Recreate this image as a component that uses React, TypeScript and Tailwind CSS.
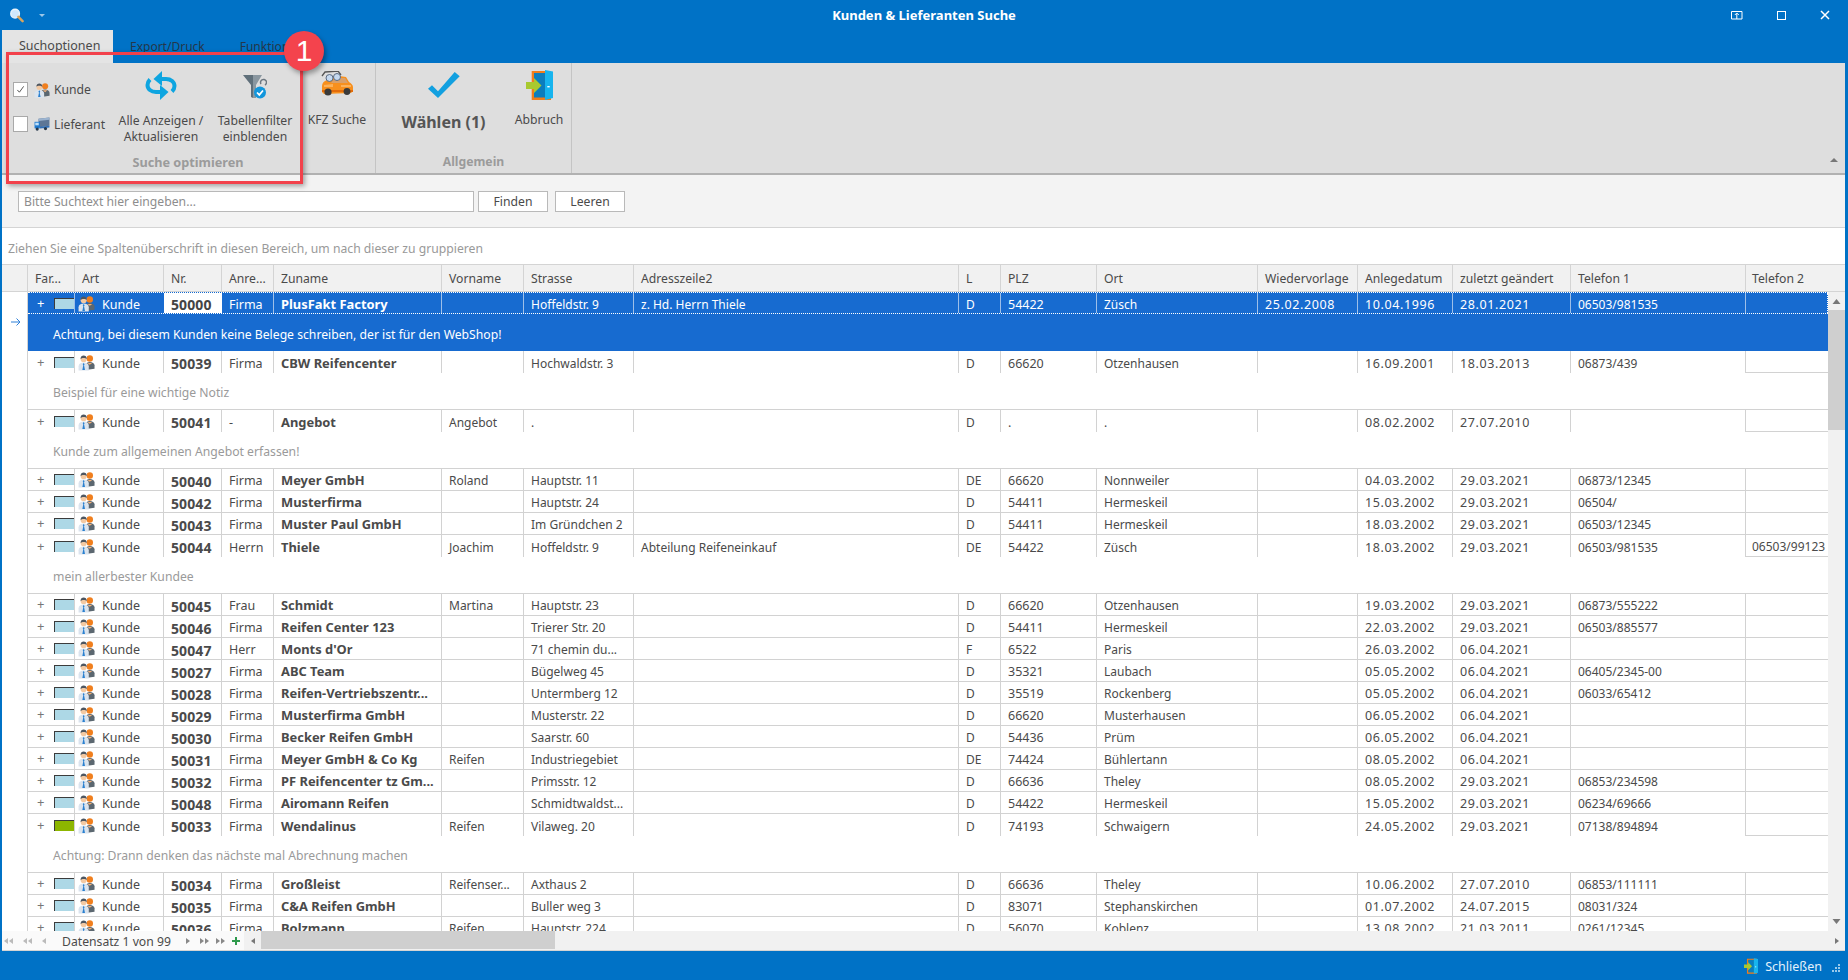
import React from "react";

type Row = {
  n: string; a: string; z: string; v?: string; s?: string; ad?: string; l: string; p: string; o: string;
  w?: string; an: string; zu: string; t1?: string; t2?: string; note?: string; green?: boolean;
};

const rows: Row[] = [
  { n: "50000", a: "Firma", z: "PlusFakt Factory", s: "Hoffeldstr. 9", ad: "z. Hd. Herrn Thiele", l: "D", p: "54422", o: "Züsch", w: "25.02.2008", an: "10.04.1996", zu: "28.01.2021", t1: "06503/981535", note: "Achtung, bei diesem Kunden keine Belege schreiben, der ist für den WebShop!" },
  { n: "50039", a: "Firma", z: "CBW Reifencenter", s: "Hochwaldstr. 3", l: "D", p: "66620", o: "Otzenhausen", an: "16.09.2001", zu: "18.03.2013", t1: "06873/439", note: "Beispiel für eine wichtige Notiz" },
  { n: "50041", a: "-", z: "Angebot", v: "Angebot", s: ".", l: "D", p: ".", o: ".", an: "08.02.2002", zu: "27.07.2010", note: "Kunde zum allgemeinen Angebot erfassen!" },
  { n: "50040", a: "Firma", z: "Meyer GmbH", v: "Roland", s: "Hauptstr. 11", l: "DE", p: "66620", o: "Nonnweiler", an: "04.03.2002", zu: "29.03.2021", t1: "06873/12345" },
  { n: "50042", a: "Firma", z: "Musterfirma", s: "Hauptstr. 24", l: "D", p: "54411", o: "Hermeskeil", an: "15.03.2002", zu: "29.03.2021", t1: "06504/" },
  { n: "50043", a: "Firma", z: "Muster Paul GmbH", s: "Im Gründchen 2", l: "D", p: "54411", o: "Hermeskeil", an: "18.03.2002", zu: "29.03.2021", t1: "06503/12345" },
  { n: "50044", a: "Herrn", z: "Thiele", v: "Joachim", s: "Hoffeldstr. 9", ad: "Abteilung Reifeneinkauf", l: "DE", p: "54422", o: "Züsch", an: "18.03.2002", zu: "29.03.2021", t1: "06503/981535", t2: "06503/99123", note: "mein allerbester Kundee" },
  { n: "50045", a: "Frau", z: "Schmidt", v: "Martina", s: "Hauptstr. 23", l: "D", p: "66620", o: "Otzenhausen", an: "19.03.2002", zu: "29.03.2021", t1: "06873/555222" },
  { n: "50046", a: "Firma", z: "Reifen Center 123", s: "Trierer Str. 20", l: "D", p: "54411", o: "Hermeskeil", an: "22.03.2002", zu: "29.03.2021", t1: "06503/885577" },
  { n: "50047", a: "Herr", z: "Monts d'Or", s: "71 chemin du...", l: "F", p: "6522", o: "Paris", an: "26.03.2002", zu: "06.04.2021" },
  { n: "50027", a: "Firma", z: "ABC Team", s: "Bügelweg 45", l: "D", p: "35321", o: "Laubach", an: "05.05.2002", zu: "06.04.2021", t1: "06405/2345-00" },
  { n: "50028", a: "Firma", z: "Reifen-Vertriebszentr...", s: "Untermberg 12", l: "D", p: "35519", o: "Rockenberg", an: "05.05.2002", zu: "06.04.2021", t1: "06033/65412" },
  { n: "50029", a: "Firma", z: "Musterfirma GmbH", s: "Musterstr. 22", l: "D", p: "66620", o: "Musterhausen", an: "06.05.2002", zu: "06.04.2021" },
  { n: "50030", a: "Firma", z: "Becker Reifen GmbH", s: "Saarstr. 60", l: "D", p: "54436", o: "Prüm", an: "06.05.2002", zu: "06.04.2021" },
  { n: "50031", a: "Firma", z: "Meyer GmbH & Co Kg", v: "Reifen", s: "Industriegebiet", l: "DE", p: "74424", o: "Bühlertann", an: "08.05.2002", zu: "06.04.2021" },
  { n: "50032", a: "Firma", z: "PF Reifencenter tz Gm...", s: "Primsstr. 12", l: "D", p: "66636", o: "Theley", an: "08.05.2002", zu: "29.03.2021", t1: "06853/234598" },
  { n: "50048", a: "Firma", z: "Airomann Reifen", s: "Schmidtwaldst...", l: "D", p: "54422", o: "Hermeskeil", an: "15.05.2002", zu: "29.03.2021", t1: "06234/69666" },
  { n: "50033", a: "Firma", z: "Wendalinus", v: "Reifen", s: "Vilaweg. 20", l: "D", p: "74193", o: "Schwaigern", an: "24.05.2002", zu: "29.03.2021", t1: "07138/894894", green: true, note: "Achtung: Drann denken das nächste mal Abrechnung machen" },
  { n: "50034", a: "Firma", z: "Großleist", v: "Reifenser...", s: "Axthaus 2", l: "D", p: "66636", o: "Theley", an: "10.06.2002", zu: "27.07.2010", t1: "06853/111111" },
  { n: "50035", a: "Firma", z: "C&A Reifen GmbH", s: "Buller weg 3", l: "D", p: "83071", o: "Stephanskirchen", an: "01.07.2002", zu: "24.07.2015", t1: "08031/324" },
  { n: "50036", a: "Firma", z: "Bolzmann", v: "Reifen", s: "Hauptstr. 224", l: "D", p: "56070", o: "Koblenz", an: "13.08.2002", zu: "21.03.2011", t1: "0261/12345" },
];

function People({ className = "" }: { className?: string }) {
  return (
    <svg viewBox="0 0 18 18" className={className}>
      <circle cx="12.5" cy="4.8" r="3.4" fill="#f07f1e" />
      <path d="M8 17V12c0-2.2 2-3.6 4.5-3.6S17.5 10 17.5 12v3.5z" fill="#5b6770" />
      <path d="M10 9.4l2.5 2 2.500-2z" fill="#f5b27a" />
      <circle cx="6" cy="5.6" r="3.2" fill="#f3c9a2" />
      <path d="M2.7 5.4C2.6 2.8 4.3 1.6 6 1.6s3.4 1.2 3.3 3.8C8.2 3.9 4.2 3.6 2.7 5.4z" fill="#4d5660" />
      <path d="M.6 17.6V13c0-2.5 2.4-3.9 5.4-3.9s5.4 1.4 5.4 3.9v4.6z" fill="#dbe4ee" />
      <path d="M6 9.4l-1 1.4.6 1.2-1 5h2.8l-1-5 .6-1.2z" fill="#2a80d0" />
    </svg>
  );
}

function Truck({ className = "" }: { className?: string }) {
  return (
    <svg viewBox="0 0 18 16" className={className}>
      <path d="M5 2l12.500-1.500v9.500L5 12z" fill="#5d7696" />
      <path d="M5 2l12.500-1.500v2.500L5 4.500z" fill="#9bb3cf" />
      <path d="M.5 5.500h6V13h-6z" fill="#1f7ad0" />
      <path d="M1.300 6.500h4v3h-4z" fill="#bfe0fa" />
      <path d="M6.500 11l11-1v2l-11 1z" fill="#2f6fb8" />
      <circle cx="3.500" cy="13.800" r="1.800" fill="#26384c" />
      <circle cx="13" cy="13.200" r="1.800" fill="#26384c" />
    </svg>
  );
}

function Door({ className = "" }: { className?: string }) {
  return (
    <svg viewBox="0 0 27 30" className={className}>
      <path d="M5.700 1H25v29H5.700z" fill="#ef7d1a" />
      <path d="M8 3h13v24.500H8z" fill="#0b7dbd" />
      <path d="M19 0l8 1.500V28l-8 2z" fill="#17b4ee" />
      <path d="M21.300 16h2.400v1.400h-2.400z" fill="#ffffff" />
      <path d="M0 12h8V8l7.500 7.500L8 23v-4H0z" fill="#a8c92f" />
    </svg>
  );
}

function Cell({ w, c = "", pt = "pt-[3px]", children }: { w: string; c?: string; pt?: string; children?: React.ReactNode }) {
  return <div className={`${w} shrink-0 flex items-center overflow-hidden whitespace-nowrap pl-[7px] ${pt} border-r border-[#d2d2d2] ${c}`}>{children}</div>;
}

function DataRow({ r, i }: { r: Row; i: number }) {
  const sel = i === 0;
  const txt = sel ? "text-white" : "text-[#4a4a4a]";
  const hasNote = !!r.note;
  const dot = sel ? "border-y border-dotted border-white" : hasNote ? "" : "border-b border-[#d2d2d2]";
  const bCol = sel ? "border-r-[#9dbfe9]" : "";
  const date = `text-[12.5px] tracking-[0.6px] ${bCol}`;
  const dp = "pt-[4px]";
  return (
    <>
      <div className={`flex h-[22px] shrink-0 text-[12px] ${sel ? "bg-[#176bd0]" : "bg-white"} ${txt} ${dot}`}>
        <div className={`w-[47px] shrink-0 flex items-center border-r ${sel ? "border-[#9dbfe9]" : "border-[#d2d2d2]"}`}>
          <span className={`w-[26px] pl-[9px] pt-[1px] text-[13px] ${sel ? "text-white" : "text-[#777]"}`}>+</span>
          <span className={`w-[21px] h-[11px] border-l border-t border-[#3c3c3c] ${r.green ? "bg-[#8db600]" : "bg-[#add8e6]"}`} />
        </div>
        <div className={`w-[89px] shrink-0 flex items-center overflow-hidden pl-[3px] border-r ${sel ? "border-transparent" : "border-[#d2d2d2]"}`}>
          <People className="w-[17px] h-[17px] shrink-0" />
          <span className="ml-[7px] pt-[4px] text-[12.5px]">Kunde</span>
        </div>
        <Cell w="w-[58px]" c={`font-bold text-[14px] tracking-[0.1px] ${sel ? "bg-white text-[#444] border-transparent" : ""}`}>{r.n}</Cell>
        <Cell w="w-[52px]" pt={dp} c={`text-[12.5px] ${bCol}`}>{r.a}</Cell>
        <Cell w="w-[168px]" c={`font-bold text-[12.9px] ${bCol}`}>{r.z}</Cell>
        <Cell w="w-[82px]" c={bCol}>{r.v}</Cell>
        <Cell w="w-[110px]" c={bCol}>{r.s}</Cell>
        <Cell w="w-[325px]" c={bCol}>{r.ad}</Cell>
        <Cell w="w-[42px]" c={bCol}>{r.l}</Cell>
        <Cell w="w-[96px]" pt={dp} c={`text-[12.5px] ${bCol}`}>{r.p}</Cell>
        <Cell w="w-[161px]" c={bCol}>{r.o}</Cell>
        <Cell w="w-[100px]" pt={dp} c={date}>{r.w}</Cell>
        <Cell w="w-[95px]" pt={dp} c={date}>{r.an}</Cell>
        <Cell w="w-[118px]" pt={dp} c={date}>{r.zu}</Cell>
        <Cell w="w-[175px]" c={bCol}>{r.t1}</Cell>
        <div className={`w-[82px] shrink-0 flex items-center overflow-hidden whitespace-nowrap pl-[6px] pt-[3px] ${sel ? "border-r border-dotted border-white" : hasNote ? "border-b border-[#d2d2d2]" : ""}`}>{r.t2}</div>
      </div>
      {r.note && (
        <div className={`h-[37px] shrink-0 flex items-center pl-[25px] pt-[5px] text-[12.2px] ${sel ? "bg-[#176bd0] text-white" : "bg-white text-[#9a9a9a] border-b border-[#d2d2d2]"}`}>
          {r.note}
        </div>
      )}
    </>
  );
}

const heads: [string, string][] = [
  ["Far...", "w-[47px]"], ["Art", "w-[89px]"], ["Nr.", "w-[58px]"], ["Anre...", "w-[52px]"], ["Zuname", "w-[168px]"],
  ["Vorname", "w-[82px]"], ["Strasse", "w-[110px]"], ["Adresszeile2", "w-[325px]"], ["L", "w-[42px]"], ["PLZ", "w-[96px]"],
  ["Ort", "w-[161px]"], ["Wiedervorlage", "w-[100px]"], ["Anlegedatum", "w-[95px]"], ["zuletzt geändert", "w-[118px]"],
  ["Telefon 1", "w-[175px]"],
];

function L({ c = "border-r-[#bbbbbb]" }: { c?: string }) {
  return <span className={`inline-block w-0 h-0 border-y-[3px] border-y-transparent border-r-[4px] ${c}`} />;
}
function R({ c = "border-l-[#888888]" }: { c?: string }) {
  return <span className={`inline-block w-0 h-0 border-y-[3px] border-y-transparent border-l-[4px] ${c}`} />;
}

export default function App() {
  return (
    <div className="relative w-[1848px] h-[980px] overflow-hidden bg-[#0072c6] flex flex-col font-['Noto_Sans','Open_Sans',sans-serif] text-[12.2px] text-[#4a4a4a]">
      {/* title bar */}
      <div className="h-[30px] shrink-0 flex items-center text-white">
        <div className="w-[150px] flex items-center">
          <svg viewBox="0 0 16 16" className="w-[15px] h-[15px] ml-[9px]">
            <circle cx="6.500" cy="6" r="4.600" fill="#cfe8fb" stroke="#eaf4fb" strokeWidth="1.500" />
            <path d="M10 9.500l4.500 4.500" stroke="#d9a55c" strokeWidth="2.600" strokeLinecap="round" />
          </svg>
          <span className="ml-[15px] w-0 h-0 border-x-[3px] border-x-transparent border-t-[3px] border-t-[#9cc7e8]" />
        </div>
        <div className="flex-1 text-center font-bold text-[13px] pt-[1px]">Kunden &amp; Lieferanten Suche</div>
        <div className="w-[150px] flex items-center justify-end pr-[18px]">
          <svg viewBox="0 0 12 9" className="w-[12px] h-[9px]"><path d="M.5.5h10.500v7.500H.5z" fill="none" stroke="#fff" /><path d="M5.800 8V3M3.800 4l2-2 2 2" fill="none" stroke="#fff" /></svg>
          <span className="ml-[34px] w-[9px] h-[9px] border border-white" />
          <svg viewBox="0 0 10 10" className="ml-[34px] w-[10px] h-[10px]"><path d="M1 1l8 8M9 1l-8 8" stroke="#fff" strokeWidth="1.500" /></svg>
        </div>
      </div>

      {/* tabs */}
      <div className="h-[33px] shrink-0 flex pl-[2px] text-[12px]">
        <div className="w-[111px] bg-[#e4e4e4] flex items-center pl-[17px] text-[12.5px]">Suchoptionen</div>
        <div className="ml-[17px] flex items-center text-[#24374a]">Export/Druck</div>
        <div className="ml-[35px] flex items-center text-[#24374a]">Funktionen</div>
      </div>

      {/* window body */}
      <div className="h-[888px] shrink-0 ml-[2px] mr-[3px] flex flex-col bg-[#f3f3f3]">
        {/* ribbon */}
        <div className="h-[112px] shrink-0 bg-[#dedede] border-b-2 border-[#b1b1b1] flex">
          <div className="w-[374px] shrink-0 border-r border-[#c4c4c4] flex flex-col">
            <div className="flex h-[88px]">
              <div className="w-[109px] shrink-0 pl-[11px] pt-[19px] flex flex-col gap-[19px]">
                <div className="flex items-center h-[15px]">
                  <span className="w-[15px] h-[15px] bg-white border border-[#a9a9a9] flex items-center justify-center">
                    <svg viewBox="0 0 10 10" className="w-[9px] h-[9px]"><path d="M1.500 5.500l2.300 2.500 4.700-6.500" fill="none" stroke="#444" strokeWidth="1" /></svg>
                  </span>
                  <People className="w-[16px] h-[16px] ml-[6px]" />
                  <span className="ml-[4px] pt-[1px]">Kunde</span>
                </div>
                <div className="flex items-center h-[16px]">
                  <span className="w-[15px] h-[16px] bg-white border border-[#a9a9a9]" />
                  <Truck className="w-[16px] h-[14px] ml-[6px]" />
                  <span className="ml-[4px] pt-[2px]">Lieferant</span>
                </div>
              </div>
              <div className="w-[100px] flex flex-col items-center shrink-0">
                <svg viewBox="0 0 32 29" className="w-[32px] h-[29px] mt-[8px]">
                  <path d="M16 8h5c5 0 8.500 3 8.500 7 0 2-1 4-2.500 5.500" fill="none" stroke="#0ea5e0" strokeWidth="4" />
                  <path d="M17 0l-8.500 8L17 15z" fill="#0ea5e0" />
                  <path d="M16 21h-5c-5 0-8.500-3-8.500-7 0-2 1-4 2.500-5.500" fill="none" stroke="#0ea5e0" strokeWidth="4" />
                  <path d="M15 14l8.500 7-8.500 8z" fill="#0ea5e0" />
                </svg>
                <div className="mt-[13px] text-center leading-[16px]">Alle Anzeigen /<br />Aktualisieren</div>
              </div>
              <div className="w-[88px] flex flex-col items-center shrink-0">
                <svg viewBox="0 0 24 24" className="w-[24px] h-[24px] mt-[12px]">
                  <path d="M0 0h10v23L8 22V10z" fill="#5f6f7a" />
                  <path d="M10 0h9l-6 10v13h-3z" fill="#8a97a0" />
                  <path d="M18 9a3 3 0 1 1 4 1" fill="none" stroke="#6c7780" strokeWidth="1.500" />
                  <circle cx="17" cy="17.500" r="6" fill="#1296dc" />
                  <path d="M14 17.500l2.300 2.400 3.700-4.400" fill="none" stroke="#fff" strokeWidth="1.700" />
                </svg>
                <div className="mt-[14px] text-center leading-[16px]">Tabellenfilter<br />einblenden</div>
              </div>
              <div className="w-[76px] flex flex-col items-center shrink-0">
                <svg viewBox="0 0 32 25" className="w-[32px] h-[25px] mt-[8px]">
                  <path d="M1 5L4 1l13-1 3 4" fill="none" stroke="#555" strokeWidth="1.300" />
                  <path d="M1 15c0-3 2-5 5-6l4-3c5-1 11-1 15 0l3 5c2 1 4 3 4 5v4l-2 2-27 1-2-2z" fill="#f7901e" />
                  <path d="M14 7h10l3 5H10z" fill="#d9a06a" />
                  <path d="M3 14l9-1v3H3zM20 14h10v2H20z" fill="#fbb25c" />
                  <path d="M1 19h31v2H1z" fill="#e36c0a" />
                  <circle cx="7" cy="21" r="3.600" fill="#3a3a3a" />
                  <circle cx="26" cy="20.500" r="3.400" fill="#3a3a3a" />
                  <circle cx="8.500" cy="7" r="3.500" fill="#c5d9f0" stroke="#5b6a80" />
                  <circle cx="16" cy="6" r="3.500" fill="#c5d9f0" stroke="#5b6a80" />
                </svg>
                <div className="mt-[16px] text-center leading-[16px]">KFZ Suche</div>
              </div>
            </div>
            <div className="w-[372px] text-center font-bold text-[12.7px] text-[#9b9b9b] leading-[16px] mt-[3px]">Suche optimieren</div>
          </div>
          <div className="w-[196px] shrink-0 border-r border-[#c4c4c4] flex flex-col">
            <div className="flex h-[88px] pl-[5px]">
              <div className="w-[125px] flex flex-col items-center shrink-0">
                <svg viewBox="0 0 32 26" className="w-[32px] h-[26px] mt-[9px]">
                  <path d="M0 16.700l4-3.400 6 6L26.700 0l5 4.300L10 26z" fill="#12a0e0" />
                </svg>
                <div className="mt-[13px] font-bold text-[16px] text-[#555] leading-[22px]">Wählen (1)</div>
              </div>
              <div className="w-[66px] flex flex-col items-center shrink-0">
                <Door className="w-[27px] h-[30px] mt-[7px]" />
                <div className="mt-[12px] text-center leading-[16px]">Abbruch</div>
              </div>
            </div>
            <div className="text-center font-bold text-[#9b9b9b] leading-[16px] mt-[3px]">Allgemein</div>
          </div>
          <div className="flex-1 flex items-end justify-end pr-[7px] pb-[11px]">
            <svg viewBox="0 0 8 5" className="w-[8px] h-[5px]"><path d="M0 5l4-4 4 4z" fill="#777" /></svg>
          </div>
        </div>

        {/* search */}
        <div className="h-[53px] shrink-0 bg-[#f3f3f3] border-b border-[#d4d4d4] flex items-start pt-[16px] pl-[16px]">
          <div className="w-[456px] h-[21px] border border-[#b9b9b9] bg-white flex items-center pl-[5px] pt-[2px] text-[#8d8d8d]">Bitte Suchtext hier eingeben...</div>
          <div className="ml-[4px] w-[70px] h-[21px] border border-[#b9b9b9] bg-white flex items-center justify-center pt-[2px]">Finden</div>
          <div className="ml-[7px] w-[70px] h-[21px] border border-[#b9b9b9] bg-white flex items-center justify-center pt-[2px]">Leeren</div>
        </div>

        {/* group panel */}
        <div className="h-[36px] shrink-0 bg-white flex items-center pl-[6px] pt-[7px] text-[#999]">
          Ziehen Sie eine Spaltenüberschrift in diesen Bereich, um nach dieser zu gruppieren
        </div>

        {/* header */}
        <div className="h-[28px] shrink-0 flex bg-[#f1f1f1] border-y border-[#d4d4d4]">
          <div className="w-[26px] shrink-0 border-r border-[#d4d4d4]" />
          {heads.map(([t, w]) => (
            <div key={t} className={`${w} shrink-0 flex items-center pl-[7px] pt-[2px] border-r border-[#d4d4d4] whitespace-nowrap overflow-hidden`}>{t}</div>
          ))}
          <div className="flex-1 flex items-center pl-[6px] pt-[2px]">Telefon 2</div>
        </div>

        {/* grid body */}
        <div className="h-[639px] shrink-0 flex overflow-hidden bg-white">
          <div className="w-[26px] shrink-0 border-r border-[#d2d2d2] flex justify-center pt-[25px] pl-[2px]">
            <svg viewBox="0 0 10 10" className="w-[10px] h-[10px]"><path d="M0 5h9M5.500 1.500L9 5 5.500 8.500" fill="none" stroke="#2f80d8" strokeWidth="1" /></svg>
          </div>
          <div className="w-[1800px] shrink-0 flex flex-col overflow-hidden">
            {rows.map((r, i) => <DataRow key={r.n} r={r} i={i} />)}
          </div>
          <div className="w-[17px] shrink-0 bg-[#f1f1f1] flex flex-col items-center">
            <div className="h-[18px] flex items-center"><svg viewBox="0 0 8 5" className="w-[9px] h-[5px]"><path d="M0 5l4-5 4 5z" fill="#777" /></svg></div>
            <div className="w-full h-[120px] bg-[#cfcfcf]" />
            <div className="flex-1" />
            <div className="h-[18px] flex items-center pb-[2px]"><svg viewBox="0 0 8 5" className="w-[9px] h-[5px]"><path d="M0 0l4 5 4-5z" fill="#777" /></svg></div>
          </div>
        </div>

        {/* footer */}
        <div className="h-[20px] shrink-0 flex border-b border-[#d4d4d4]">
          <div className="w-[242px] shrink-0 bg-[#fafafa] flex items-center">
            <span className="w-[12px] flex justify-center gap-[1px]"><L /><L /></span>
            <span className="w-[26px] flex justify-center gap-[1px]"><L /><L /></span>
            <span className="w-[8px] flex justify-center"><L /></span>
            <span className="ml-[14px] w-[118px] whitespace-nowrap pt-[4px]">Datensatz 1 von 99</span>
            <span className="w-[16px] flex justify-center"><R /></span>
            <span className="w-[16px] flex justify-center gap-[1px]"><R /><R /></span>
            <span className="w-[16px] flex justify-center gap-[1px]"><R /><R /></span>
            <span className="w-[16px] flex justify-center">
              <svg viewBox="0 0 10 10" className="w-[10px] h-[10px]"><path d="M5 1v8M1 5h8" stroke="#2e9a4c" strokeWidth="2" /></svg>
            </span>
          </div>
          <div className="flex-1 flex bg-[#f1f1f1]">
            <div className="w-[17px] flex items-center justify-center"><L c="border-r-[#777777]" /></div>
            <div className="w-[294px] h-[18px] bg-[#cfcfcf]" />
            <div className="flex-1" />
            <div className="w-[17px] flex items-center justify-center"><R c="border-l-[#777777]" /></div>
          </div>
        </div>
      </div>

      {/* status bar */}
      <div className="h-[29px] shrink-0 flex items-center justify-end text-[#e4f1fb] text-[12.5px]">
        <Door className="w-[14px] h-[16px]" />
        <span className="ml-[7px] pt-[4px]">Schließen</span>
        <svg viewBox="0 0 10 10" className="ml-[9px] mr-[7px] w-[10px] h-[10px] mt-[4px]">
          <g fill="#9ac9ea"><rect x="7" y="1" width="2" height="2" /><rect x="4" y="4" width="2" height="2" /><rect x="7" y="4" width="2" height="2" /><rect x="1" y="7" width="2" height="2" /><rect x="4" y="7" width="2" height="2" /><rect x="7" y="7" width="2" height="2" /></g>
        </svg>
      </div>

      {/* annotation overlay */}
      <div className="absolute left-[6px] top-[52px] w-[297px] h-[132px] border-[3.5px] border-[#f2414b] shadow-[2px_2px_5px_rgba(0,0,0,0.35)] pointer-events-none" />
      <div className="absolute left-[284px] top-[31px] w-[40px] h-[40px] rounded-full bg-[#f4434d] shadow-[2px_3px_5px_rgba(0,0,0,0.35)] flex items-center justify-center text-white text-[30px] leading-none font-['Liberation_Sans',sans-serif]">1</div>
    </div>
  );
}
